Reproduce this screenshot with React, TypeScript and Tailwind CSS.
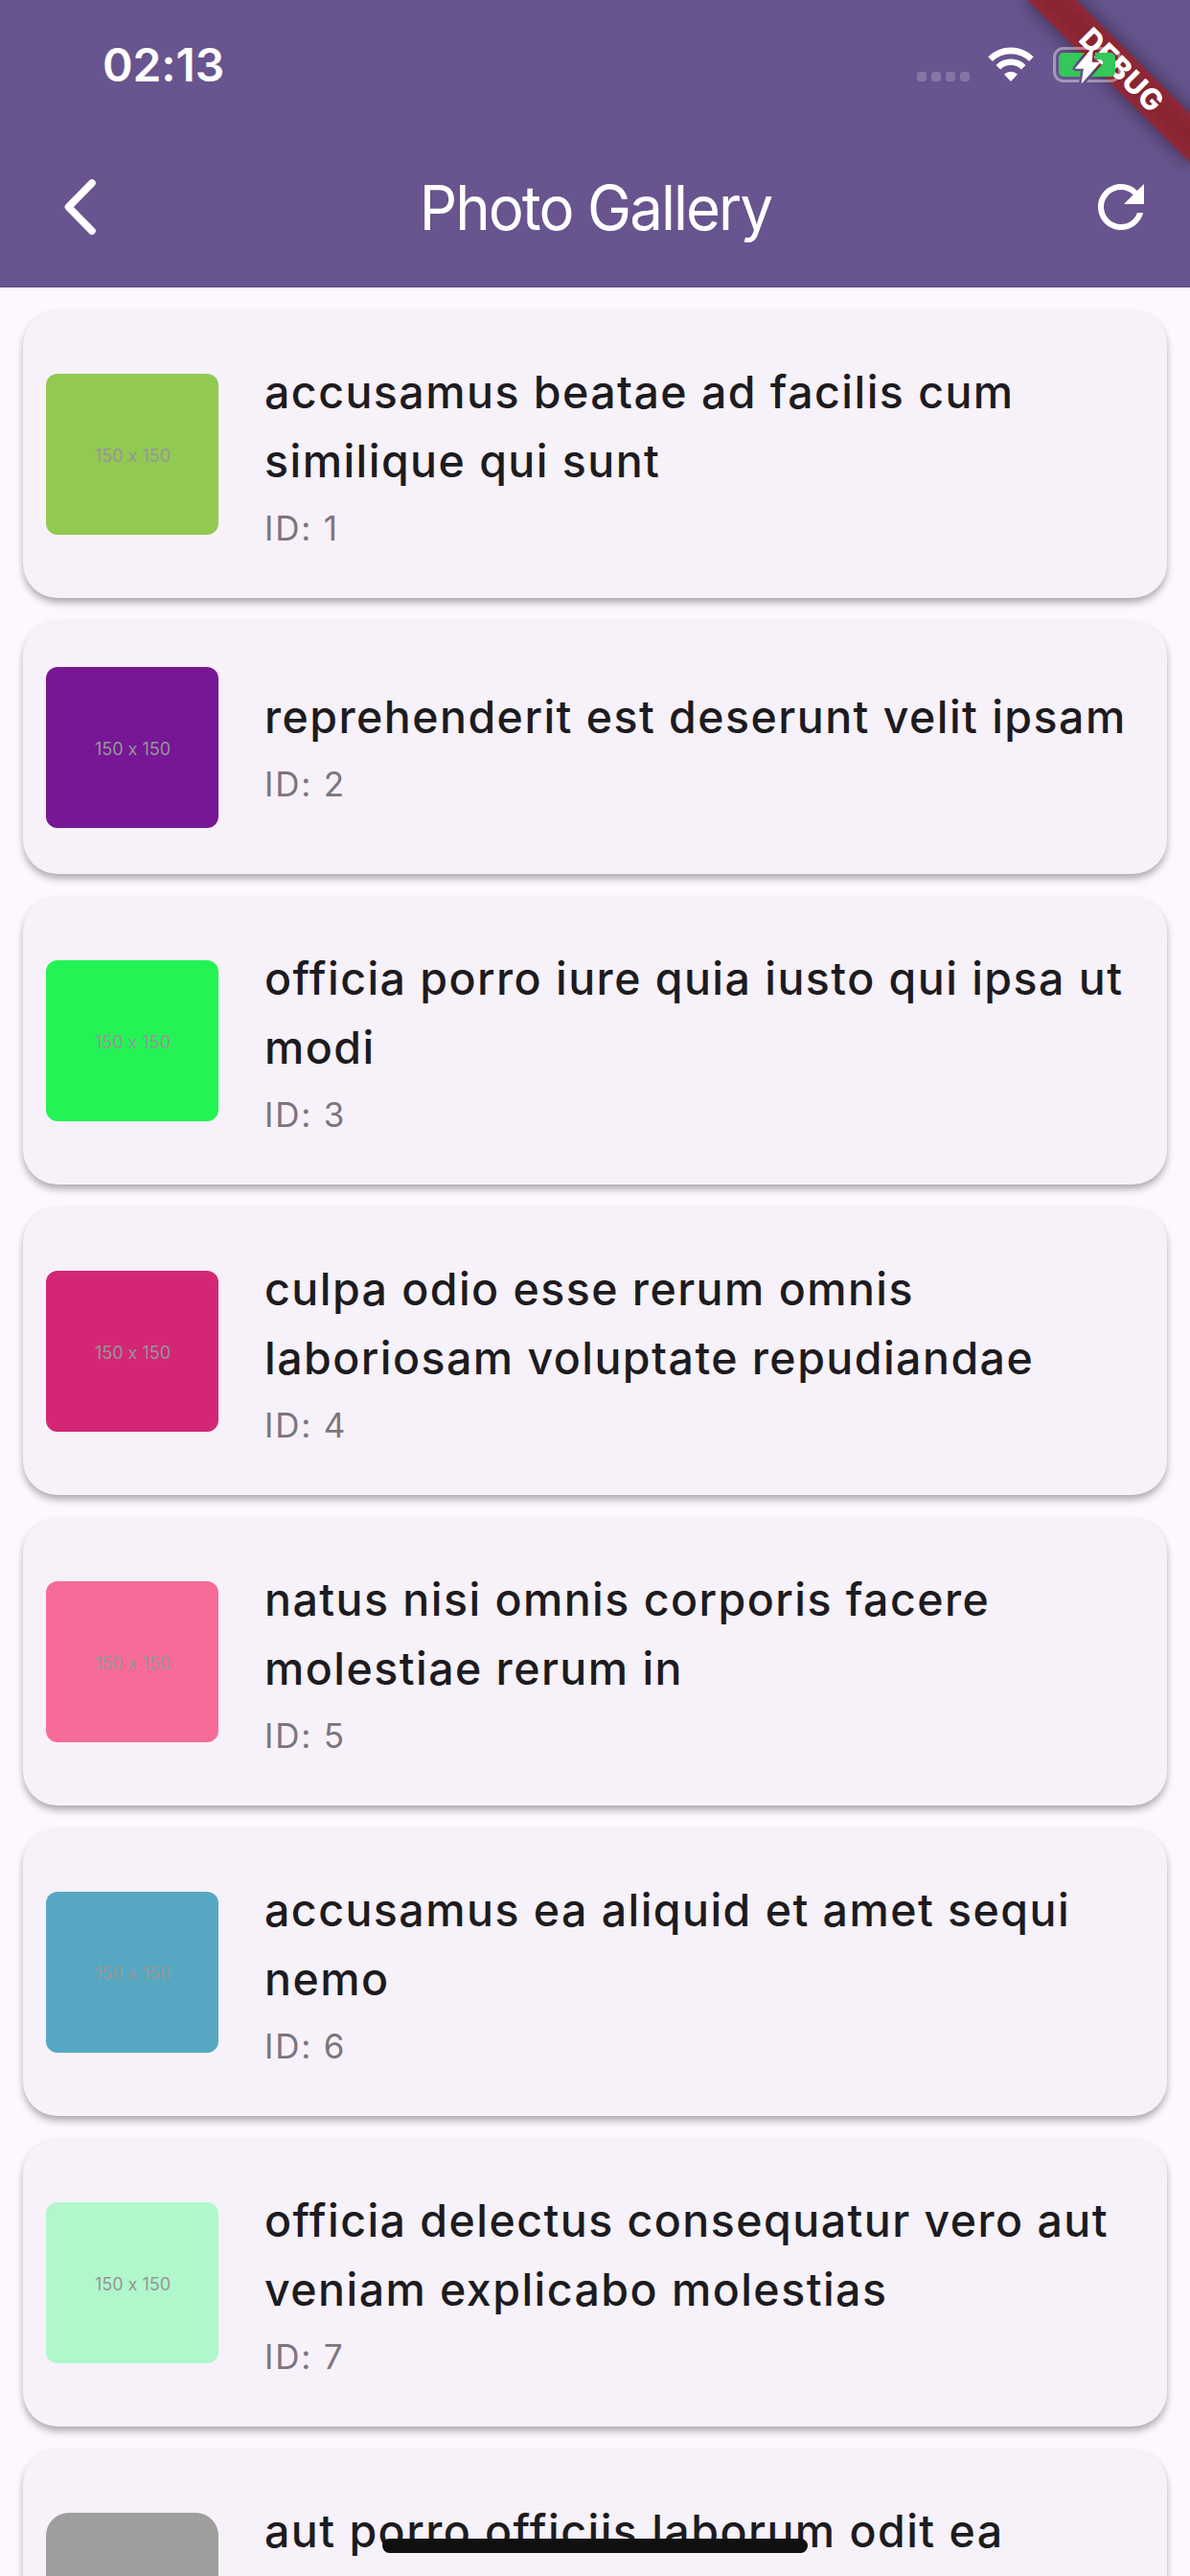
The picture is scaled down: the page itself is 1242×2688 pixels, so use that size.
import React from "react";

type Photo = { title: string[]; caption?: string; tall: boolean; swatch: string; loaded: boolean };

const photos: Photo[] = [
  { title: ["accusamus beatae ad facilis cum", "similique qui sunt"], caption: "ID: 1", tall: true, swatch: "bg-[#92c952] rounded-xl", loaded: true },
  { title: ["reprehenderit est deserunt velit ipsam"], caption: "ID: 2", tall: false, swatch: "bg-[#771796] rounded-xl", loaded: true },
  { title: ["officia porro iure quia iusto qui ipsa ut", "modi"], caption: "ID: 3", tall: true, swatch: "bg-[#24f355] rounded-xl", loaded: true },
  { title: ["culpa odio esse rerum omnis", "laboriosam voluptate repudiandae"], caption: "ID: 4", tall: true, swatch: "bg-[#d32776] rounded-xl", loaded: true },
  { title: ["natus nisi omnis corporis facere", "molestiae rerum in"], caption: "ID: 5", tall: true, swatch: "bg-[#f66b97] rounded-xl", loaded: true },
  { title: ["accusamus ea aliquid et amet sequi", "nemo"], caption: "ID: 6", tall: true, swatch: "bg-[#56a8c2] rounded-xl", loaded: true },
  { title: ["officia delectus consequatur vero aut", "veniam explicabo molestias"], caption: "ID: 7", tall: true, swatch: "bg-[#b0f7cc] rounded-xl", loaded: true },
  { title: ["aut porro officiis laborum odit ea"], tall: true, swatch: "bg-[#9e9e9e] rounded-[24px]", loaded: false },
];

function Wifi() {
  return (
    <svg className="h-9 w-12" viewBox="0 0 48 36" fill="none" stroke="white">
      <path d="M2.6 12.6a30.5 30.5 0 0 1 42.8 0" strokeWidth="6.6" />
      <path d="M10.8 21.2a18.8 18.8 0 0 1 26.4 0" strokeWidth="6.4" />
      <path d="M17 28.4a10.3 10.3 0 0 1 14 0L24 36z" fill="white" stroke="none" />
    </svg>
  );
}

function Battery() {
  return (
    <svg className="block h-[42px] w-[84px]" viewBox="0 0 84 42" fill="none">
      <defs>
        <mask id="bolt-gap">
          <rect width="84" height="42" fill="white" />
          <path d="M41.5 3.5 23.5 25.3H32.3L30.2 40.5 49 19.2H40.3z" fill="black" stroke="black" strokeWidth="6" strokeLinejoin="round" />
        </mask>
      </defs>
      <g mask="url(#bolt-gap)">
        <rect x="1.5" y="4.5" width="68" height="34" rx="9.5" stroke="white" strokeOpacity="0.4" strokeWidth="3" />
        <rect x="6" y="9" width="59" height="25" rx="5" fill="#34c759" />
      </g>
      <path d="M41.5 3.5 23.5 25.3H32.3L30.2 40.5 49 19.2H40.3z" fill="white" stroke="white" strokeWidth="0.8" strokeLinejoin="round" />
    </svg>
  );
}

function DebugBanner() {
  return (
    <div className="pointer-events-none absolute top-0 right-0 z-10 h-[240px] w-[240px] overflow-hidden">
      <div className="absolute top-[54px] right-[-48px] flex h-9 w-[240px] rotate-45 items-center justify-center bg-linear-to-b from-[#902838] via-[#86232f] to-[#902838] pl-[3px] text-[30.6px] leading-none font-extrabold tracking-[0.6px] text-white shadow-[0_0_20px_rgba(0,0,0,0.5)]">
        <span>DEBUG</span>
      </div>
    </div>
  );
}

function StatusBar() {
  return (
    <div className="flex h-[132px] items-start justify-between pr-[59px] pl-[107px]">
      <span className="mt-[37px] text-[48px] leading-[62px] font-semibold tracking-[-0.1px]">02:13</span>
      <div className="flex">
        <div className="mt-[75px] flex gap-[5px]">
          {[0, 1, 2, 3].map((i) => (
            <i key={i} className="size-[10px] rounded-[3px] bg-white/20" />
          ))}
        </div>
        <div className="mt-[49px] ml-[19px]">
          <Wifi />
        </div>
        <div className="relative z-20 mt-[46px] ml-5">
          <Battery />
        </div>
      </div>
    </div>
  );
}

function Header() {
  return (
    <header className="relative h-[300px] overflow-hidden bg-[#68548e] text-white">
      <StatusBar />
      <div className="flex h-[168px] items-center justify-between pr-[36px] pl-[48px]">
        <svg className="-mr-3 h-[72px] w-[72px]" viewBox="0 0 72 72" fill="none" stroke="white" strokeWidth="7.6" strokeLinecap="round" strokeLinejoin="round">
          <path d="M48 11 23.5 36 48 61" />
        </svg>
        <h1 className="mt-[2px] scale-x-[0.965] text-[64px] leading-[84px] font-normal tracking-[-2px]">Photo Gallery</h1>
        <svg className="h-[72px] w-[72px]" viewBox="0 0 24 24" fill="white">
          <path d="M17.65 6.35A7.958 7.958 0 0 0 12 4c-4.42 0-7.99 3.58-7.99 8s3.57 8 7.99 8c3.73 0 6.84-2.55 7.73-6h-2.08A5.99 5.99 0 0 1 12 18c-3.31 0-6-2.69-6-6s2.69-6 6-6c1.66 0 3.14.69 4.22 1.78L13 11h7V4l-2.35 2.35z" />
        </svg>
      </div>
      <DebugBanner />
    </header>
  );
}

function PhotoCard({ photo }: { photo: Photo }) {
  return (
    <article
      className={
        "flex shrink-0 items-center gap-12 rounded-[36px] bg-[#f7f1f9] px-6 shadow-[0_6px_9px_-1px_rgba(0,0,0,0.24),0_3px_7px_0_rgba(0,0,0,0.12)] " +
        (photo.tall ? "h-[300px]" : "h-[264px]")
      }
    >
      <div className={"flex h-[168px] w-[180px] shrink-0 items-center justify-center " + photo.swatch}>
        {photo.loaded && (
          <span className="mt-1 ml-px text-[18px] leading-none text-[#969696] [font-feature-settings:'calt'_0]">150 x 150</span>
        )}
      </div>
      <div className={"self-start whitespace-nowrap " + (photo.tall ? "pt-[49px]" : "pt-[64px]")}>
        {photo.title.map((line) => (
          <p key={line} className="text-[46.5px] leading-[72px] font-medium tracking-[1.45px] text-[#1d1b20]">
            {line}
          </p>
        ))}
        {photo.caption && <p className="mt-[10px] text-[35px] leading-[48px] tracking-[1.8px] text-[#7b757f]">{photo.caption}</p>}
      </div>
    </article>
  );
}

export default function App() {
  return (
    <div className="relative flex h-[2688px] w-[1242px] flex-col overflow-hidden bg-[#fef7ff] font-['Inter',sans-serif]">
      <Header />
      <main className="flex flex-1 flex-col gap-6 overflow-hidden p-6">
        {photos.map((p) => (
          <PhotoCard key={p.title[0]} photo={p} />
        ))}
      </main>
      <div className="absolute bottom-6 left-[399px] h-[15px] w-[444px] rounded-full bg-[#101010]" />
    </div>
  );
}
